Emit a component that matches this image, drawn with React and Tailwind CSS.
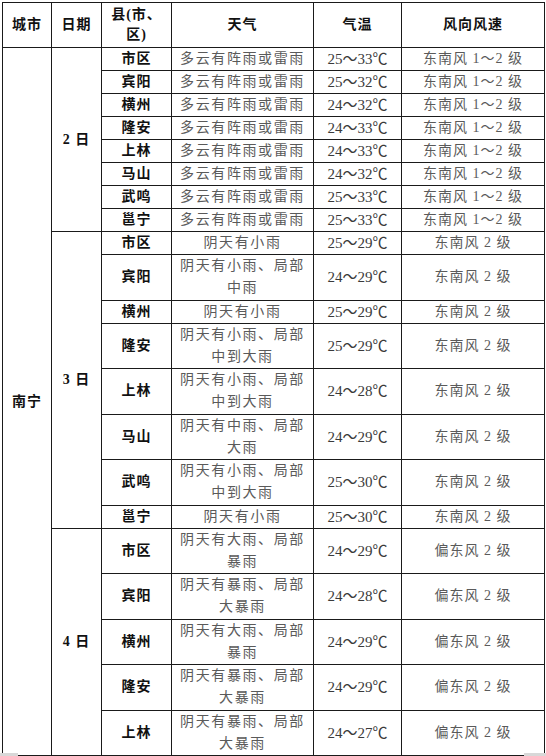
import React from "react";

const F = { fontFamily: '"Liberation Serif", "Noto Sans CJK SC", serif' };

const d2 = ["市区", "宾阳", "横州", "隆安", "上林", "马山", "武鸣", "邕宁"];
const t2 = ["25～33℃", "25～32℃", "24～32℃", "24～33℃", "24～33℃", "24～32℃", "25～33℃", "25～33℃"];

const d3 = [
  ["市区", ["阴天有小雨"], "25～29℃", "东南风 2 级"],
  ["宾阳", ["阴天有小雨、局部", "中雨"], "24～29℃", "东南风 2 级"],
  ["横州", ["阴天有小雨"], "25～29℃", "东南风 2 级"],
  ["隆安", ["阴天有小雨、局部", "中到大雨"], "25～29℃", "东南风 2 级"],
  ["上林", ["阴天有小雨、局部", "中到大雨"], "24～28℃", "东南风 2 级"],
  ["马山", ["阴天有中雨、局部", "大雨"], "24～29℃", "东南风 2 级"],
  ["武鸣", ["阴天有小雨、局部", "中到大雨"], "25～30℃", "东南风 2 级"],
  ["邕宁", ["阴天有小雨"], "25～30℃", "东南风 2 级"],
];

const d4 = [
  ["市区", ["阴天有大雨、局部", "暴雨"], "24～29℃", "偏东风 2 级"],
  ["宾阳", ["阴天有暴雨、局部", "大暴雨"], "24～28℃", "偏东风 2 级"],
  ["横州", ["阴天有大雨、局部", "暴雨"], "24～29℃", "偏东风 2 级"],
  ["隆安", ["阴天有暴雨、局部", "大暴雨"], "24～29℃", "偏东风 2 级"],
  ["上林", ["阴天有暴雨、局部", "大暴雨"], "24～27℃", "偏东风 2 级"],
];

const td = "border border-[#1a1a1a] p-0 text-center align-middle leading-[18px]";
const bold = "font-bold text-[#111] text-[14px] tracking-[1px]";
const weather = "text-[#5a5a5a] text-[14px] tracking-[1.6px]";
const temp = "text-[#3a3a3a] text-[15px]";
const wind = "text-[#5a5a5a] text-[14px] tracking-[1px]";

function Row({ first, name, w, t, wd, h }) {
  return (
    <tr className={h}>
      {first}
      <td className={`${td} ${bold}`}>{name}</td>
      <td className={`${td} ${weather}`}>
        {w.map((l, i) => (
          <div key={i} className={w.length > 1 ? "leading-[22px]" : "leading-[18px]"}>
            {l}
          </div>
        ))}
      </td>
      <td className={`${td} ${temp}`}>{t}</td>
      <td className={`${td} ${wind}`}>{wd}</td>
    </tr>
  );
}

export default function App() {
  return (
    <div className="w-[546px] h-[756px] bg-white pl-[2px] pt-[2px] relative overflow-hidden" style={F}>
      <table className="table-fixed border-collapse w-[542px]">
        <colgroup>
          <col className="w-[49px]" />
          <col className="w-[50px]" />
          <col className="w-[70px]" />
          <col className="w-[142px]" />
          <col className="w-[88px]" />
          <col className="w-[143px]" />
        </colgroup>
        <tbody>
          <tr className="h-[45px]">
            <td className={`${td} ${bold}`}>城市</td>
            <td className={`${td} ${bold}`}>日期</td>
            <td className={`${td} ${bold}`}>
              <div className="leading-[20px]">县(市、</div>
              <div className="leading-[20px]">区)</div>
            </td>
            <td className={`${td} ${bold}`}>天气</td>
            <td className={`${td} ${bold}`}>气温</td>
            <td className={`${td} ${bold}`}>风向风速</td>
          </tr>
          {d2.map((n, i) => (
            <Row
              key={"a" + i}
              h="h-[23px]"
              first={
                i === 0 ? (
                  <>
                    <td rowSpan={31} className={`${td} ${bold}`}>南宁</td>
                    <td rowSpan={8} className={`${td} ${bold}`}>2 日</td>
                  </>
                ) : null
              }
              name={n}
              w={["多云有阵雨或雷雨"]}
              t={t2[i]}
              wd="东南风 1～2 级"
            />
          ))}
          {d3.map((r, i) => (
            <Row
              key={"b" + i}
              h={r[1].length > 1 ? "h-[45.5px]" : "h-[23px]"}
              first={i === 0 ? <td rowSpan={8} className={`${td} ${bold}`}>3 日</td> : null}
              name={r[0]}
              w={r[1]}
              t={r[2]}
              wd={r[3]}
            />
          ))}
          {d4.map((r, i) => (
            <Row
              key={"c" + i}
              h="h-[45.5px]"
              first={i === 0 ? <td rowSpan={5} className={`${td} ${bold}`}>4 日</td> : null}
              name={r[0]}
              w={r[1]}
              t={r[2]}
              wd={r[3]}
            />
          ))}
        </tbody>
      </table>
      <div className="absolute left-0 bottom-0 w-[18px] h-[3px] bg-[#d8d8d8]" />
      <div className="absolute right-0 bottom-0 w-[22px] h-[3px] bg-[#d8d8d8]" />
    </div>
  );
}
